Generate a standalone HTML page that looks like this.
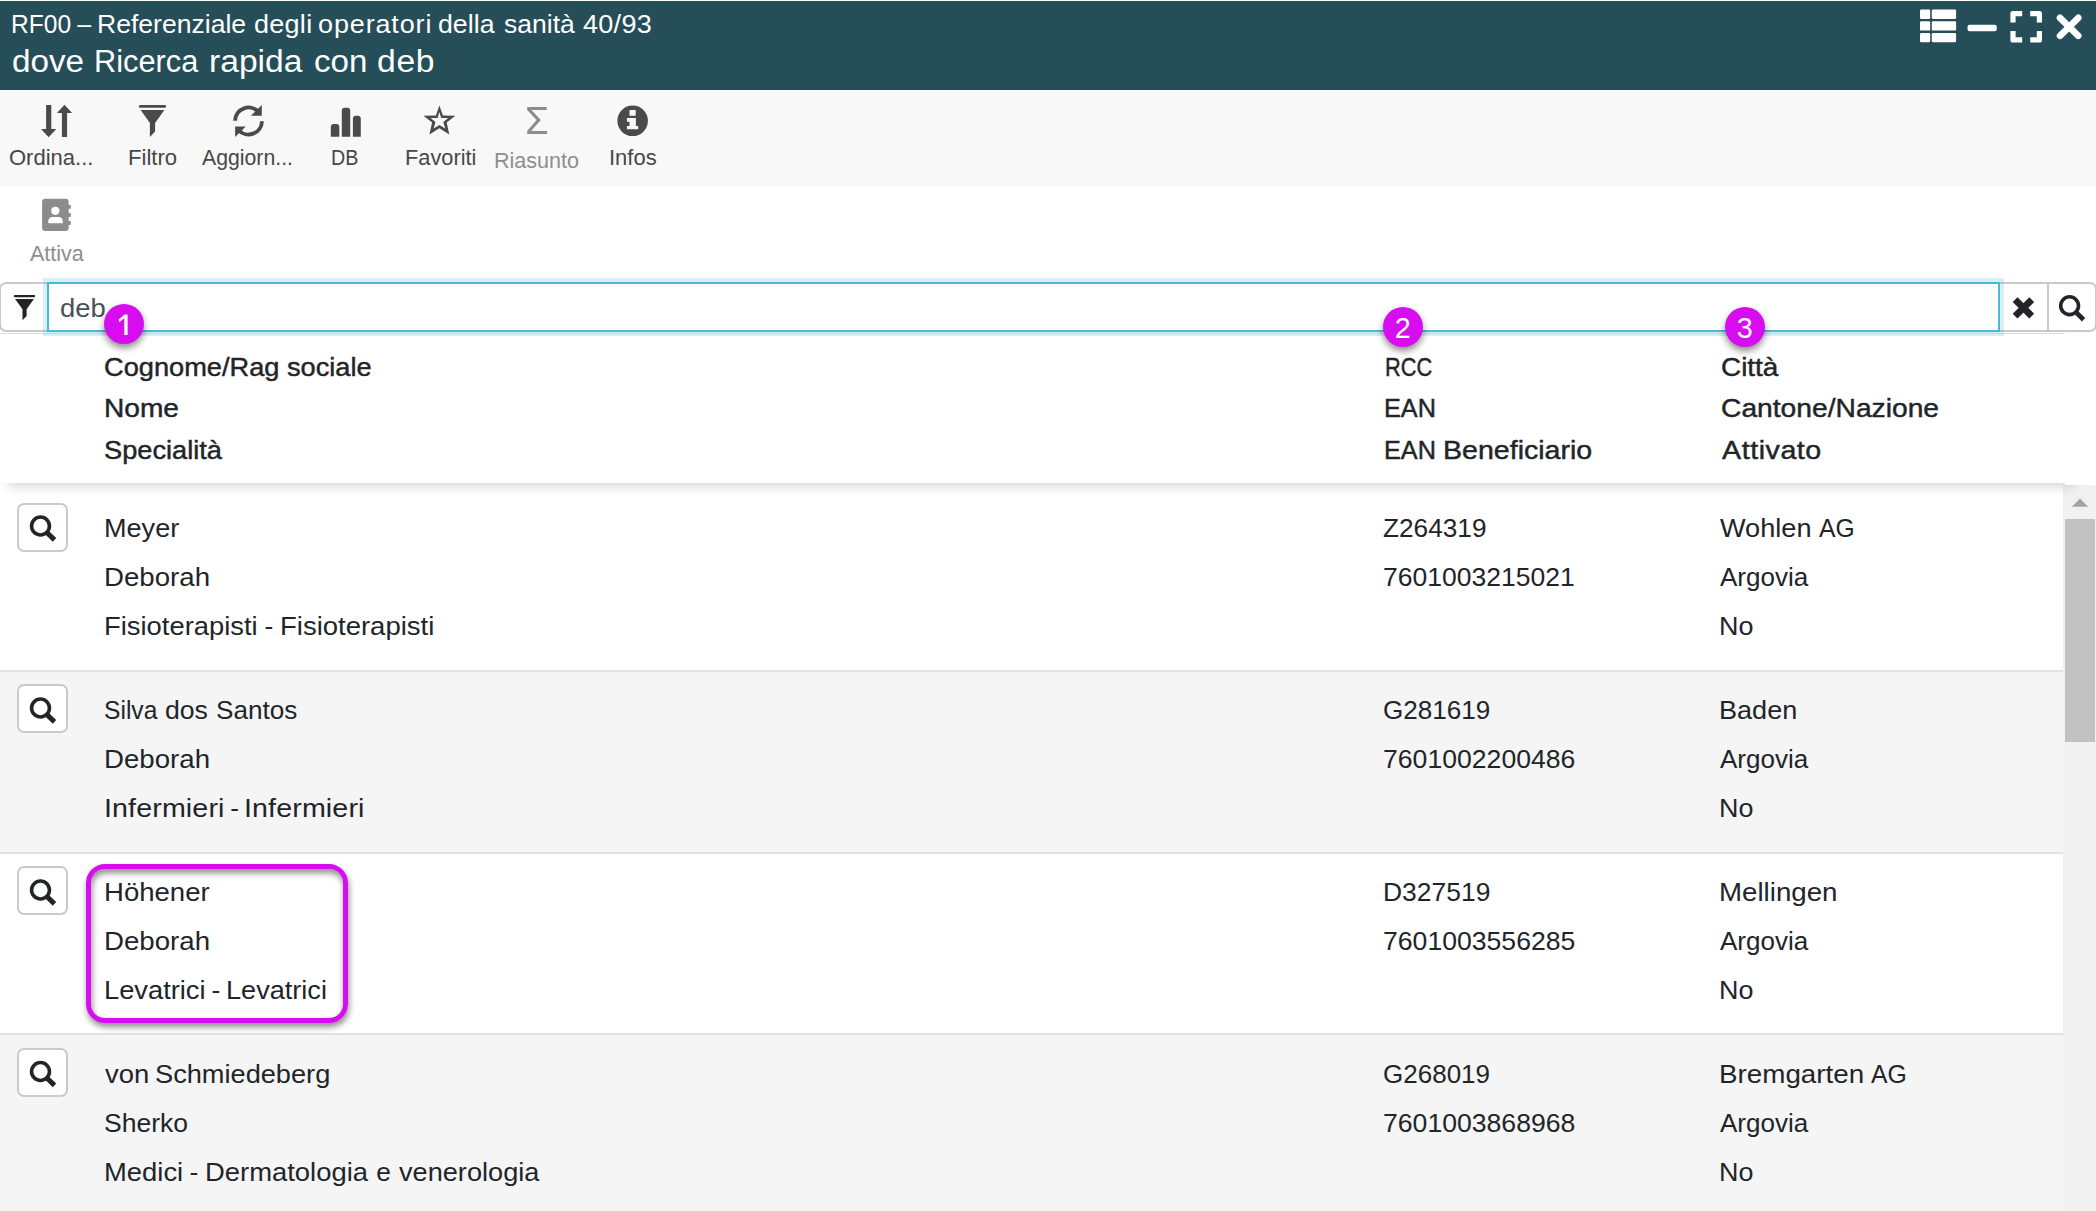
<!DOCTYPE html>
<html lang="it">
<head>
<meta charset="utf-8">
<title>RF00 – Referenziale degli operatori della sanità</title>
<style>
*{box-sizing:border-box;margin:0;padding:0}
html,body{width:2096px;height:1211px;overflow:hidden;background:#fff}
body{position:relative;font-family:"Liberation Sans",sans-serif;color:#212529}
.abs{position:absolute}
.t{position:absolute;white-space:nowrap;line-height:1;transform-origin:0 0;font-family:"Liberation Sans",sans-serif}
#titlebar{position:absolute;left:0;top:1px;width:2096px;height:89px;background:#264e58}
#toolbar{position:absolute;left:0;top:90px;width:2096px;height:96px;background:#f8f8f8}
svg{position:absolute;overflow:visible}
/* search bar */
#fbtn{position:absolute;left:-1px;top:282px;width:50px;height:50px;border:2px solid #cacaca;border-right:none;border-radius:7px 0 0 7px;background:#fff}
#ring{position:absolute;left:43px;top:278px;width:1961px;height:58px;background:rgba(77,184,209,.225)}
#inp{position:absolute;left:47px;top:282px;width:1953px;height:50px;border:2px solid #4db8d1;background:#fff}
#xbtn{position:absolute;left:2000px;top:282px;width:49px;height:50px;border:2px solid #cacaca;border-left:none;background:#fff}
#sbtn{position:absolute;left:2047px;top:282px;width:50px;height:50px;border:2px solid #cacaca;border-radius:0 7px 7px 0;background:#fff}
/* table */
#hdrline{position:absolute;left:0;top:333px;width:2065px;height:1px;background:#dedede}
#hdr{position:absolute;left:0;top:334px;width:2082px;height:149px;background:#fff;box-shadow:0 10px 12px -8px rgba(0,0,0,.2)}
.row{position:absolute;left:0;width:2063px;height:180px}
.row.alt{background:#f5f5f5}
.sep{position:absolute;left:0;width:2063px;height:2px;background:#e2e2e2}
.rbtn{position:absolute;left:17px;width:51px;height:49px;border:2px solid #cacaca;border-radius:7px;background:#fff}
#track{position:absolute;left:2063px;top:485px;width:33px;height:726px;background:#f1f1f1}
#thumb{position:absolute;left:2065px;top:519px;width:30px;height:223px;background:#c1c1c1}
.badge{position:absolute;width:40px;height:40px;border-radius:50%;background:#d70df0;box-shadow:0 4px 7px rgba(0,0,0,.45)}
#hl{position:absolute;left:86px;top:864px;width:262px;height:159px;border:5.3px solid #d70df0;border-radius:19px;box-shadow:1px 4px 6px rgba(0,0,0,.45), inset 1px 4px 6px rgba(0,0,0,.45)}
</style>
</head>
<body>
<div id="titlebar"></div>
<div id="toolbar"></div>

<!-- rows -->
<div class="row" style="top:490px"></div>
<div class="sep" style="top:670px"></div>
<div class="row alt" style="top:672px"></div>
<div class="sep" style="top:852px"></div>
<div class="row" style="top:854px"></div>
<div class="sep" style="top:1033px"></div>
<div class="row alt" style="top:1035px"></div>
<div class="rbtn" style="top:503px"></div>
<div class="rbtn" style="top:684px"></div>
<div class="rbtn" style="top:866px"></div>
<div class="rbtn" style="top:1048px"></div>
<div id="track"></div>
<div id="thumb"></div>
<svg style="left:2071px;top:498px" width="18" height="10" viewBox="0 0 18 10"><path d="M0.8 8.8 L9 0.6 L17.2 8.8 Z" fill="#a3a3a3"/></svg>

<!-- header -->
<div id="hdrline"></div>
<div id="hdr"></div>
<div class="abs" style="left:2065px;top:334px;width:31px;height:151px;background:#fff"></div>

<!-- search bar -->
<div id="fbtn"></div>
<div id="xbtn"></div>
<div id="sbtn"></div>
<div id="ring"></div>
<div id="inp"></div>

<div id="hl"></div>
<div class="badge" style="left:104px;top:304px"></div>
<div class="badge" style="left:1383px;top:307px"></div>
<div class="badge" style="left:1725px;top:307px"></div>

<svg style="left:0;top:0" width="2096" height="1211" viewBox="0 0 2096 1211">
<!-- window controls -->
<g fill="#fff">
  <rect x="1920" y="9.6" width="10.2" height="9.3" rx="1.2"/>
  <rect x="1931.8" y="9.6" width="24.3" height="9.3" rx="1.2"/>
  <rect x="1920" y="21.3" width="10.2" height="9.3" rx="1.2"/>
  <rect x="1931.8" y="21.3" width="24.3" height="9.3" rx="1.2"/>
  <rect x="1920" y="33" width="10.2" height="9.3" rx="1.2"/>
  <rect x="1931.8" y="33" width="24.3" height="9.3" rx="1.2"/>
  <rect x="1967.5" y="24.8" width="29.3" height="6.5" rx="2.2"/>
</g>
<g fill="none" stroke="#fff" stroke-width="5.2" stroke-linejoin="round" stroke-linecap="butt">
  <path d="M2013 22.6 V13.7 H2022.2"/>
  <path d="M2030.2 13.7 H2039.4 V22.6"/>
  <path d="M2013 31 V39.9 H2022.2"/>
  <path d="M2030.2 39.9 H2039.4 V31"/>
</g>
<g fill="none" stroke="#fff" stroke-width="6.6" stroke-linecap="round">
  <path d="M2060 17.8 L2078.3 35.8 M2078.3 17.8 L2060 35.8"/>
</g>

<!-- toolbar: sort -->
<g fill="#4a4a4a">
  <path d="M46.1 105.1 H51.3 V129 H56.2 L48.65 137.2 L41.1 129 H46.1 Z"/>
  <path d="M61.9 137 H67.1 V112.9 H72.1 L64.5 104.8 L56.9 112.9 H61.9 Z"/>
</g>
<!-- toolbar: filter -->
<g fill="#4a4a4a">
  <rect x="138.9" y="104.9" width="27.15" height="2.95" rx="1.45"/>
  <path d="M140.6 110.1 H164.4 L155.1 122.9 V131.5 L149.9 136.9 V122.9 Z"/>
</g>
<!-- toolbar: refresh -->
<g fill="none" stroke="#4a4a4a" stroke-width="3.9">
  <path d="M235.05 120.8 A13.45 13.45 0 0 1 258.8 112.35"/>
  <path d="M261.95 121.2 A13.45 13.45 0 0 1 238.2 129.65"/>
</g>
<g fill="#4a4a4a">
  <path d="M261.8 105 V115.7 H250.9 Z"/>
  <path d="M235.1 136.9 V126.4 H245.8 Z"/>
</g>
<!-- toolbar: bar chart -->
<g fill="#4a4a4a">
  <path d="M330.8 136.8 V127 Q330.8 124.1 333.7 124.1 H336.4 Q339.3 124.1 339.3 127 V136.8 Z"/>
  <path d="M341.8 136.8 V110.6 Q341.8 107.7 344.7 107.7 H347.3 Q350.2 107.7 350.2 110.6 V136.8 Z"/>
  <path d="M352.9 136.8 V118.7 Q352.9 115.8 355.8 115.8 H357.9 Q360.8 115.8 360.8 118.7 V136.8 Z"/>
</g>
<!-- toolbar: star -->
<path fill-rule="evenodd" fill="#4a4a4a" d="M439.4 105.6 L442.9 115.5 L455.3 115.7 L446.7 122.6 L449.3 134.5 L439.4 128.3 L429.4 134.5 L432.1 122.6 L423.4 115.7 L435.9 115.5 Z M439.4 111.9 L437.6 117.9 L430.6 118.1 L435.5 122.0 L433.6 128.4 L439.4 124.9 L445.2 128.4 L443.3 122.0 L448.2 118.1 L441.2 117.9 Z"/>
<!-- toolbar: sigma -->
<path fill="#8c8c8c" d="M527.2 107.1 H546.7 V109.9 H531.4 L540.8 119.9 L531.2 131.1 H547.1 V133.9 H527.2 V131.0 L536.6 120.0 L527.2 110.0 Z"/>
<!-- toolbar: info -->
<circle cx="632.65" cy="120.85" r="15.25" fill="#4a4a4a"/>
<g fill="#f8f8f8">
  <rect x="629.5" y="109.9" width="6.2" height="5.9" rx="0.5"/>
  <path d="M626.9 118.1 H635.9 V125.9 H638.2 V129.2 H626.9 V125.9 H629.5 V121.8 H626.9 Z"/>
</g>
<!-- attiva: address book -->
<g fill="#8c8c8c">
  <rect x="42.1" y="198.8" width="26.6" height="32.2" rx="3.2"/>
  <rect x="67" y="205" width="3.8" height="3.8" rx="0.6"/>
  <rect x="67" y="213.1" width="3.8" height="3.8" rx="0.6"/>
  <rect x="67" y="221.1" width="3.8" height="3.8" rx="0.6"/>
</g>
<g fill="#fff">
  <circle cx="55.3" cy="210.8" r="4.1"/>
  <path d="M48.3 223.2 V221.6 Q48.3 217 52.6 217 H58.4 Q62.8 217 62.8 221.6 V223.2 Z"/>
</g>
<!-- search bar: filter -->
<g fill="#212529">
  <rect x="13.8" y="295" width="21.4" height="2.3" rx="1.1"/>
  <path d="M15.1 299.1 H33.9 L26.6 309.2 V316 L22.5 320.3 V309.2 Z"/>
</g>
<!-- search bar: times -->
<path d="M2015.1 299.7 L2031.7 316.1 M2031.7 299.7 L2015.1 316.1" stroke="#212529" stroke-width="6.8" fill="none"/>
<!-- search bar: search -->
<g fill="none" stroke="#212529">
  <circle cx="2069.6" cy="305.7" r="8.9" stroke-width="3.6"/>
  <path d="M2075.6 311.9 L2083.6 319.8" stroke-width="4.8"/>
</g>
<!-- row search icons -->
<g fill="none" stroke="#212529">
  <circle cx="40.5" cy="526.00" r="8.95" stroke-width="3.6"/>
  <path d="M46.6 532.20 L54.5 539.90" stroke-width="5"/>
</g>
<g fill="none" stroke="#212529">
  <circle cx="40.5" cy="708.00" r="8.95" stroke-width="3.6"/>
  <path d="M46.6 714.20 L54.5 721.90" stroke-width="5"/>
</g>
<g fill="none" stroke="#212529">
  <circle cx="40.5" cy="890.00" r="8.95" stroke-width="3.6"/>
  <path d="M46.6 896.20 L54.5 903.90" stroke-width="5"/>
</g>
<g fill="none" stroke="#212529">
  <circle cx="40.5" cy="1071.50" r="8.95" stroke-width="3.6"/>
  <path d="M46.6 1077.70 L54.5 1085.40" stroke-width="5"/>
</g>
<!-- badge digit 1 -->
<path d="M124.6 314.4 H127.6 V334.9 H124.3 V318.3 L119.3 322.2 L118.6 319.4 Z" fill="#fff"/>
</svg>

<div class="ln">
<span class="t" style="left:11.32px;top:12px;font-size:24.9px;transform:scaleX(0.9875);color:#fff;">RF00 </span>
<span class="t" style="left:77.15px;top:12px;font-size:24.9px;color:#fff;">– </span>
<span class="t" style="left:97.17px;top:12px;font-size:24.9px;transform:scaleX(1.0672);color:#fff;">Referenziale </span>
<span class="t" style="left:253.61px;top:12px;font-size:24.9px;letter-spacing:0.250px;transform:scaleX(1.0850);color:#fff;">degli </span>
<span class="t" style="left:318.12px;top:12px;font-size:24.9px;letter-spacing:0.790px;transform:scaleX(1.0850);color:#fff;">operatori </span>
<span class="t" style="left:438.33px;top:12px;font-size:24.9px;transform:scaleX(1.0745);color:#fff;">della </span>
<span class="t" style="left:503.70px;top:12px;font-size:24.9px;transform:scaleX(1.0664);color:#fff;">sanità </span>
<span class="t" style="left:583.00px;top:12px;font-size:24.9px;letter-spacing:0.261px;transform:scaleX(1.0850);color:#fff;">40/93</span>
</div>
<div class="ln">
<span class="t" style="left:11.93px;top:46px;font-size:31.0px;transform:scaleX(1.0726);color:#fff;">dove </span>
<span class="t" style="left:93.72px;top:46px;font-size:31.0px;transform:scaleX(0.9919);color:#fff;">Ricerca </span>
<span class="t" style="left:208.73px;top:46px;font-size:31.0px;transform:scaleX(1.0844);color:#fff;">rapida </span>
<span class="t" style="left:313.83px;top:46px;font-size:31.0px;transform:scaleX(1.0683);color:#fff;">con </span>
<span class="t" style="left:376.52px;top:46px;font-size:31.0px;letter-spacing:0.651px;transform:scaleX(1.0850);color:#fff;">deb</span>
</div>
<div class="t" style="left:9.26px;top:147px;font-size:21.2px;transform:scaleX(1.0387);color:#474747;">Ordina...</div>
<div class="t" style="left:128.36px;top:147px;font-size:21.2px;transform:scaleX(1.0442);color:#474747;">Filtro</div>
<div class="t" style="left:201.70px;top:147px;font-size:21.2px;transform:scaleX(1.0034);color:#474747;">Aggiorn...</div>
<div class="t" style="left:331.27px;top:147px;font-size:21.2px;transform:scaleX(0.9293);color:#474747;">DB</div>
<div class="t" style="left:405.37px;top:147px;font-size:21.2px;transform:scaleX(1.0273);color:#474747;">Favoriti</div>
<div class="t" style="left:494.48px;top:150px;font-size:21.2px;transform:scaleX(1.0166);color:#8e8e8e;">Riasunto</div>
<div class="t" style="left:609.26px;top:147px;font-size:21.2px;transform:scaleX(1.0374);color:#474747;">Infos</div>
<div class="t" style="left:29.60px;top:243px;font-size:21.2px;transform:scaleX(1.0149);color:#8e8e8e;">Attiva</div>
<div class="t" style="left:59.96px;top:295px;font-size:26.4px;transform:scaleX(1.0389);color:#495057;">deb</div>
<div class="ln">
<span class="t" style="left:104.39px;top:354px;font-size:26.4px;transform:scaleX(1.0308);color:#212529;-webkit-text-stroke:0.45px #212529;">Cognome/Rag </span>
<span class="t" style="left:287.22px;top:354px;font-size:26.4px;transform:scaleX(1.0305);color:#212529;-webkit-text-stroke:0.45px #212529;">sociale</span>
</div>
<div class="t" style="left:104.49px;top:395px;font-size:26.4px;transform:scaleX(1.0656);color:#212529;-webkit-text-stroke:0.45px #212529;">Nome</div>
<div class="t" style="left:104.49px;top:437px;font-size:26.4px;transform:scaleX(1.0308);color:#212529;-webkit-text-stroke:0.45px #212529;">Specialità</div>
<div class="t" style="left:1384.57px;top:354px;font-size:26.4px;transform:scaleX(0.8266);color:#212529;-webkit-text-stroke:0.45px #212529;">RCC</div>
<div class="t" style="left:1384.31px;top:395px;font-size:26.4px;transform:scaleX(0.9573);color:#212529;-webkit-text-stroke:0.45px #212529;">EAN</div>
<div class="ln">
<span class="t" style="left:1384.31px;top:437px;font-size:26.4px;transform:scaleX(0.9573);color:#212529;-webkit-text-stroke:0.45px #212529;">EAN </span>
<span class="t" style="left:1442.66px;top:437px;font-size:26.4px;transform:scaleX(1.0824);color:#212529;-webkit-text-stroke:0.45px #212529;">Beneficiario</span>
</div>
<div class="t" style="left:1721.26px;top:354px;font-size:26.4px;transform:scaleX(1.0574);color:#212529;-webkit-text-stroke:0.45px #212529;">Città</div>
<div class="t" style="left:1721.25px;top:395px;font-size:26.4px;transform:scaleX(1.0692);color:#212529;-webkit-text-stroke:0.45px #212529;">Cantone/Nazione</div>
<div class="t" style="left:1721.52px;top:437px;font-size:26.4px;letter-spacing:0.501px;transform:scaleX(1.0850);color:#212529;-webkit-text-stroke:0.45px #212529;">Attivato</div>
<div class="t" style="left:103.75px;top:515px;font-size:26.4px;transform:scaleX(1.0261);color:#212529;">Meyer</div>
<div class="t" style="left:103.70px;top:564px;font-size:26.4px;transform:scaleX(1.0476);color:#212529;">Deborah</div>
<div class="ln">
<span class="t" style="left:103.73px;top:613px;font-size:26.4px;transform:scaleX(1.0374);color:#212529;">Fisioterapisti </span>
<span class="t" style="left:264.50px;top:613px;font-size:26.4px;color:#212529;">- </span>
<span class="t" style="left:279.62px;top:613px;font-size:26.4px;transform:scaleX(1.0416);color:#212529;">Fisioterapisti</span>
</div>
<div class="t" style="left:1383.30px;top:515px;font-size:26.4px;transform:scaleX(0.9932);color:#212529;">Z264319</div>
<div class="t" style="left:1382.69px;top:564px;font-size:26.4px;transform:scaleX(1.0051);color:#212529;">7601003215021</div>
<div class="ln">
<span class="t" style="left:1720.20px;top:515px;font-size:26.4px;transform:scaleX(1.0283);color:#212529;">Wohlen </span>
<span class="t" style="left:1819.10px;top:515px;font-size:26.4px;transform:scaleX(0.9344);color:#212529;">AG</span>
</div>
<div class="t" style="left:1719.70px;top:564px;font-size:26.4px;transform:scaleX(0.9866);color:#212529;">Argovia</div>
<div class="t" style="left:1719.46px;top:613px;font-size:26.4px;transform:scaleX(1.0207);color:#212529;">No</div>
<div class="ln">
<span class="t" style="left:103.97px;top:697px;font-size:26.4px;transform:scaleX(0.9323);color:#212529;">Silva </span>
<span class="t" style="left:164.99px;top:697px;font-size:26.4px;transform:scaleX(1.0084);color:#212529;">dos </span>
<span class="t" style="left:216.11px;top:697px;font-size:26.4px;transform:scaleX(0.9893);color:#212529;">Santos</span>
</div>
<div class="t" style="left:103.70px;top:746px;font-size:26.4px;transform:scaleX(1.0476);color:#212529;">Deborah</div>
<div class="ln">
<span class="t" style="left:103.63px;top:795px;font-size:26.4px;letter-spacing:0.110px;transform:scaleX(1.0850);color:#212529;">Infermieri </span>
<span class="t" style="left:230.30px;top:795px;font-size:26.4px;color:#212529;">- </span>
<span class="t" style="left:244.33px;top:795px;font-size:26.4px;letter-spacing:0.110px;transform:scaleX(1.0850);color:#212529;">Infermieri</span>
</div>
<div class="t" style="left:1383.01px;top:697px;font-size:26.4px;transform:scaleX(0.9877);color:#212529;">G281619</div>
<div class="t" style="left:1382.69px;top:746px;font-size:26.4px;transform:scaleX(1.0083);color:#212529;">7601002200486</div>
<div class="t" style="left:1719.45px;top:697px;font-size:26.4px;transform:scaleX(1.0257);color:#212529;">Baden</div>
<div class="t" style="left:1719.70px;top:746px;font-size:26.4px;transform:scaleX(0.9866);color:#212529;">Argovia</div>
<div class="t" style="left:1719.46px;top:795px;font-size:26.4px;transform:scaleX(1.0207);color:#212529;">No</div>
<div class="t" style="left:103.71px;top:879px;font-size:26.4px;transform:scaleX(1.0438);color:#212529;">Höhener</div>
<div class="t" style="left:103.70px;top:928px;font-size:26.4px;transform:scaleX(1.0476);color:#212529;">Deborah</div>
<div class="ln">
<span class="t" style="left:103.73px;top:977px;font-size:26.4px;transform:scaleX(1.0335);color:#212529;">Levatrici </span>
<span class="t" style="left:211.60px;top:977px;font-size:26.4px;color:#212529;">- </span>
<span class="t" style="left:226.05px;top:977px;font-size:26.4px;transform:scaleX(1.0272);color:#212529;">Levatrici</span>
</div>
<div class="t" style="left:1382.70px;top:879px;font-size:26.4px;transform:scaleX(1.0024);color:#212529;">D327519</div>
<div class="t" style="left:1382.69px;top:928px;font-size:26.4px;transform:scaleX(1.0078);color:#212529;">7601003556285</div>
<div class="t" style="left:1719.40px;top:879px;font-size:26.4px;transform:scaleX(1.0487);color:#212529;">Mellingen</div>
<div class="t" style="left:1719.70px;top:928px;font-size:26.4px;transform:scaleX(0.9866);color:#212529;">Argovia</div>
<div class="t" style="left:1719.46px;top:977px;font-size:26.4px;transform:scaleX(1.0207);color:#212529;">No</div>
<div class="ln">
<span class="t" style="left:104.50px;top:1061px;font-size:26.4px;transform:scaleX(1.0398);color:#212529;">von </span>
<span class="t" style="left:155.27px;top:1061px;font-size:26.4px;transform:scaleX(1.0299);color:#212529;">Schmiedeberg</span>
</div>
<div class="t" style="left:103.89px;top:1110px;font-size:26.4px;transform:scaleX(1.0056);color:#212529;">Sherko</div>
<div class="ln">
<span class="t" style="left:103.72px;top:1159px;font-size:26.4px;transform:scaleX(1.0382);color:#212529;">Medici </span>
<span class="t" style="left:189.50px;top:1159px;font-size:26.4px;color:#212529;">- </span>
<span class="t" style="left:205.02px;top:1159px;font-size:26.4px;transform:scaleX(1.0388);color:#212529;">Dermatologia </span>
<span class="t" style="left:376.25px;top:1159px;font-size:26.4px;color:#212529;">e </span>
<span class="t" style="left:398.50px;top:1159px;font-size:26.4px;transform:scaleX(1.0287);color:#212529;">venerologia</span>
</div>
<div class="t" style="left:1383.01px;top:1061px;font-size:26.4px;transform:scaleX(0.9858);color:#212529;">G268019</div>
<div class="t" style="left:1382.69px;top:1110px;font-size:26.4px;transform:scaleX(1.0078);color:#212529;">7601003868968</div>
<div class="ln">
<span class="t" style="left:1719.39px;top:1061px;font-size:26.4px;transform:scaleX(1.0529);color:#212529;">Bremgarten </span>
<span class="t" style="left:1871.40px;top:1061px;font-size:26.4px;transform:scaleX(0.9371);color:#212529;">AG</span>
</div>
<div class="t" style="left:1719.70px;top:1110px;font-size:26.4px;transform:scaleX(0.9866);color:#212529;">Argovia</div>
<div class="t" style="left:1719.46px;top:1159px;font-size:26.4px;transform:scaleX(1.0207);color:#212529;">No</div>
<div class="t" style="left:1394.75px;top:314px;font-size:28.8px;color:#fff;">2</div>
<div class="t" style="left:1736.85px;top:314px;font-size:28.8px;color:#fff;">3</div>
</body>
</html>
